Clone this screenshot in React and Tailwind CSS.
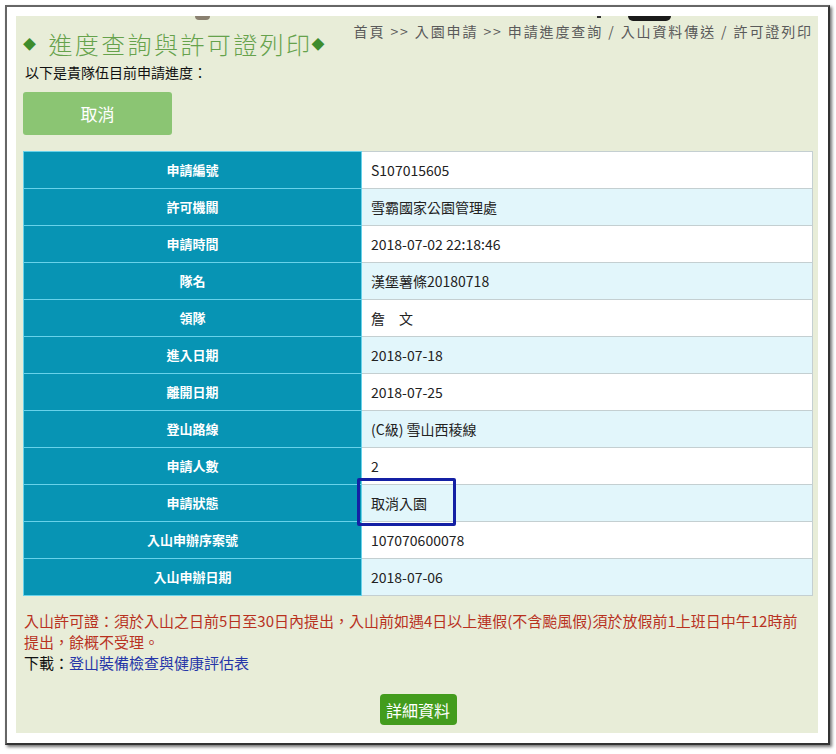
import React from 'react'

const ROWS = [
  ['申請編號', 'S107015605'],
  ['許可機關', '雪霸國家公園管理處'],
  ['申請時間', '2018-07-02 22:18:46'],
  ['隊名', '漢堡薯條20180718'],
  ['領隊', '詹　文'],
  ['進入日期', '2018-07-18'],
  ['離開日期', '2018-07-25'],
  ['登山路線', '(C級) 雪山西稜線'],
  ['申請人數', '2'],
  ['申請狀態', '取消入園', true],
  ['入山申辦序案號', '107070600078'],
  ['入山申辦日期', '2018-07-06'],
]

const font = { fontFamily: '"Noto Sans CJK TC", "Noto Sans", sans-serif' }

export default function App() {
  return (
    <div className="min-h-[754px] w-[836px] bg-white pl-[5px] pt-[5px]" style={font}>
      {/* 外框 */}
      <div className="w-[825px] border-2 border-t-[#666] border-l-[#666] border-r-[#333] border-b-[#333] bg-white pb-[10px] pl-[9px] pr-[10px] pt-[9px] shadow-[2px_2px_3px_rgba(0,0,0,0.55)]">
        <div className="relative bg-[#e8edd8] pb-[8px] pl-[7px] pr-[5px]">
          {/* 上方被裁切的圖 */}
          <div className="absolute left-[179px] top-0 h-[4px] w-[15px] rounded-b-full bg-[#8a8070]" />
          <div className="absolute left-[581px] top-0 h-[2px] w-[4px] bg-[#333]" />
          <div className="absolute left-[612px] top-0 h-[5px] w-[43px] rounded-b-[8px] bg-[#1a1a1a]" />

          {/* 標題列 */}
          <div className="flex items-start justify-between pt-[5px]">
            <h1 className="mt-[9px] flex items-center text-[24px] font-light leading-[28px] tracking-[2.4px] text-[#66a24c]">
              <span className="mr-[10px] text-[13px] text-[#3d8c2c]">◆</span>
              進度查詢與許可證列印
              <span className="ml-[-1px] text-[13px] text-[#3d8c2c]">◆</span>
            </h1>
            <div className="whitespace-nowrap text-[14px] leading-[20px] tracking-[1.9px] text-[#5a5a5a]">
              首頁 &gt;&gt; 入園申請 &gt;&gt; 申請進度查詢 / 入山資料傳送 / 許可證列印
            </div>
          </div>

          <p className="mt-[4px] pl-[2px] text-[14px] leading-[20px] text-[#111]">以下是貴隊伍目前申請進度：</p>

          <button className="mt-[10px] flex h-[43px] w-[149px] items-center justify-center rounded-[3px] bg-[#8bc573] text-[17px] text-white">
            取消
          </button>

          {/* 進度表 */}
          <table className="mt-[16px] w-[790px] border-collapse">
            <tbody>
              {ROWS.map(([label, value, mark], i) => (
                <tr key={label} className="h-[37px]">
                  <td className="w-[338px] border border-[#68d2ea] bg-[#0794b4] text-center text-[13px] font-bold text-white">
                    {label}
                  </td>
                  <td
                    className={`relative border border-[#c4cfd1] pl-[9px] text-[14px] text-[#222] ${
                      i % 2 === 1 ? 'bg-[#e2f6fb]' : 'bg-white'
                    }`}
                  >
                    {value}
                    {mark && (
                      <span className="absolute left-[-5px] top-[-7px] z-10 h-[48px] w-[99px] rounded-[2px] border-[3px] border-[#1420a4]" />
                    )}
                  </td>
                </tr>
              ))}
            </tbody>
          </table>

          {/* 說明 */}
          <div className="mt-[14px] pl-[1px] text-[15px] leading-[21px]">
            <p className="text-[#b8321f]">
              入山許可證：須於入山之日前5日至30日內提出，入山前如遇4日以上連假(不含颱風假)須於放假前1上班日中午12時前
              <br />
              提出，餘概不受理。
            </p>
            <p className="text-[#111]">
              下載：<span className="text-[#2636a8]">登山裝備檢查與健康評估表</span>
            </p>
          </div>

          <div className="mt-[21px] flex justify-center">
            <button className="flex h-[31px] w-[77px] items-center justify-center rounded-[4px] bg-[#439c1d] text-[16px] text-white">
              詳細資料
            </button>
          </div>
        </div>
      </div>
    </div>
  )
}
